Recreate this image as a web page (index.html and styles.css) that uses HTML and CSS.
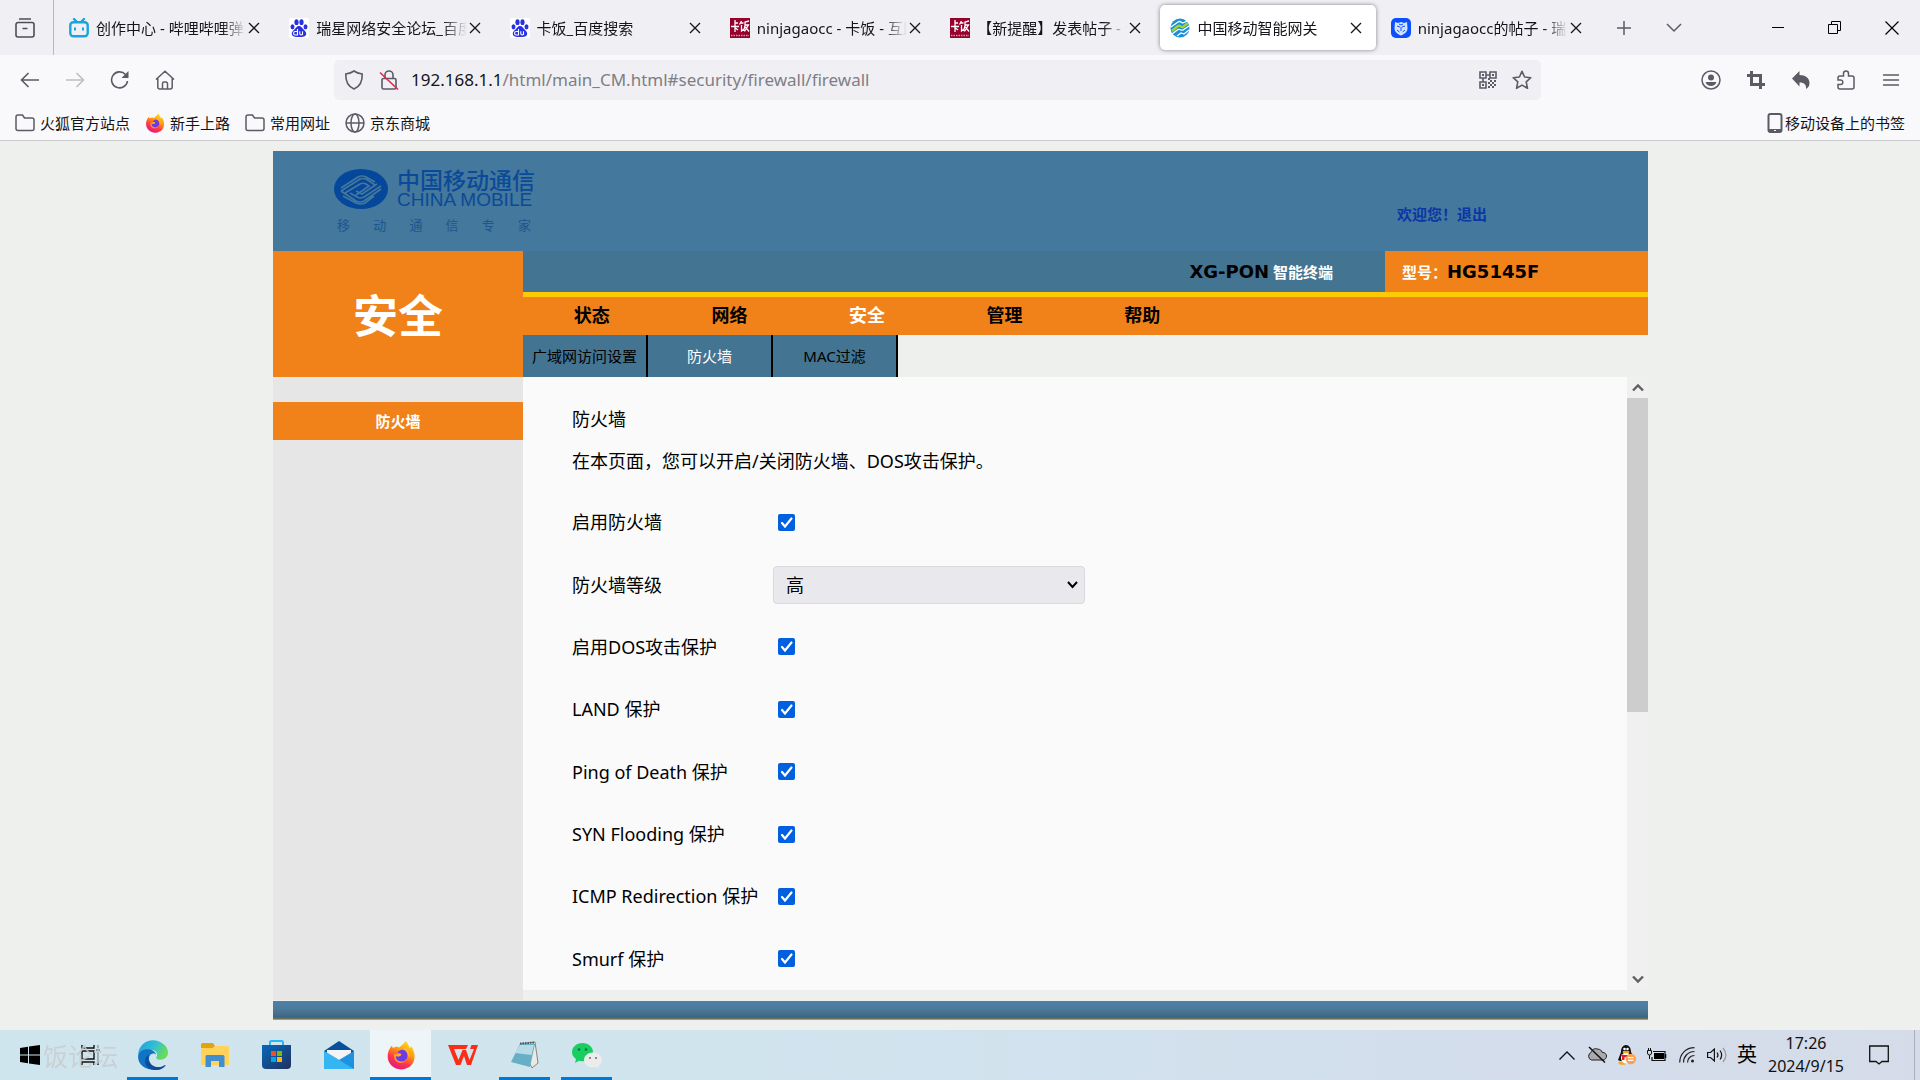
FILE: index.html
```html
<!DOCTYPE html>
<html lang="zh-CN">
<head>
<meta charset="utf-8">
<title>中国移动智能网关</title>
<link rel="stylesheet" href="styles.css">
</head>
<body>
<svg class="defs" aria-hidden="true">
  <defs>
    <linearGradient id="fxBody" x1="0.8" y1="0" x2="0.3" y2="1">
      <stop offset="0" stop-color="#ffe226"/><stop offset="0.4" stop-color="#ff980e"/><stop offset="0.7" stop-color="#ff3647"/><stop offset="1" stop-color="#e31587"/>
    </linearGradient>
    <linearGradient id="edgeTop" x1="0" y1="0" x2="1" y2="0.4">
      <stop offset="0" stop-color="#1b9de2"/><stop offset="0.6" stop-color="#35c1d1"/><stop offset="1" stop-color="#66dc58"/>
    </linearGradient>
    <linearGradient id="storeBody" x1="0" y1="0" x2="1" y2="1">
      <stop offset="0" stop-color="#0669bd"/><stop offset="1" stop-color="#22305c"/>
    </linearGradient>
    <symbol id="x" viewBox="0 0 12 12"><path d="M1 1l10 10M11 1L1 11" fill="none" stroke="#15141a" stroke-width="1.3"/></symbol>
    <symbol id="folder" viewBox="0 0 20 20"><path d="M1 4a2 2 0 0 1 2-2h4.500l2 3H17a2 2 0 0 1 2 2v8.500a2 2 0 0 1-2 2H3a2 2 0 0 1-2-2z" fill="none" stroke="#5b5b66" stroke-width="1.5"/></symbol>
    <symbol id="paw" viewBox="0 0 20 20"><rect width="20" height="20" rx="2" fill="#fff"/><g fill="#2932e1"><ellipse cx="7.500" cy="4.200" rx="2.100" ry="2.900"/><ellipse cx="12.500" cy="4.200" rx="2.100" ry="2.900"/><ellipse cx="3.500" cy="8.800" rx="2" ry="2.600"/><ellipse cx="16.500" cy="8.800" rx="2" ry="2.600"/><path d="M10 8c2.400 0 3 2 4.500 3.500s3.200 2.700 2.600 5-2.800 2.500-7.100 2.500-6.500-.3-7.100-2.500 1-3.500 2.600-5S7.600 8 10 8z"/></g><path d="M8.500 11v6H6.300a1.600 1.600 0 0 1 0-3.500h2M10.800 13.200v2.600c0 1.500 2.700 1.500 2.700 0v-2.600V17" fill="none" stroke="#fff" stroke-width="1.100"/></symbol>
    <symbol id="kafan" viewBox="0 0 20 20"><rect width="20" height="20" fill="#96002c"/><g fill="none" stroke="#fff" stroke-width="1.300"><path d="M5 2v12M5 5h3M1 8.500h8M5.500 10l2.500 2M11.500 3l-2 3.500M10.500 5h3M11.500 7v6l2-1.500M19 3l-4 1v4l-1.500 5M15 7h3.500l-4 6.500M15.500 9l3.500 4.500"/></g><path d="M1 17.500h18" stroke="#d99" stroke-width="1.600" stroke-dasharray="1.500 1"/></symbol>
    <symbol id="fx" viewBox="0 0 30 32"><path d="M20 1c3 3 3 5 4.500 7.500 1-.5 1-1.500 1-2.500C28.500 10 30 14 29.500 19 29 26.500 22.500 31.500 15 31.500S1 26 .7 18C.5 13 2.500 9 5.500 5.500c0 1.500.3 2 1 3C9 6.500 12 7 13 8c2-1.500 5-4 7-7z" fill="url(#fxBody)"/><path d="M18 6c4 4 7 7 6 13 0 0-1-2-2-3 0 6-4 9-8 8.500-5-.5-7.500-5-6-9.500 2 1 3.500 0 5.500-.5-1-2-.5-3 0-4.500 2.500 2 5.500 1 4.500-4z" fill="#ffbd2e" opacity=".75"/><path d="M14 11c4-2 8 1.500 8 5.500s-3 7-7 6.500c-3.500-.4-6-3-5.500-6 2 1.500 5.500.5 6-1.500.2-1-2.500-1.500-4-2 .5-1.500 1.500-2 2.500-2.500z" fill="#6f3adf"/></symbol>
  </defs>
</svg>

<header class="browser">
  <div class="tabstrip">
    <button class="tabview" aria-label="最近浏览">
      <svg width="20" height="20" viewBox="0 0 20 20" fill="none" stroke="#4f4e58" stroke-width="1.600"><path d="M4 1h12M1 6.500a2 2 0 0 1 2-2h14a2 2 0 0 1 2 2V17a2 2 0 0 1-2 2H3a2 2 0 0 1-2-2zM7.500 10.500h5"/></svg>
    </button>
    <div class="tabs" role="tablist">
      <div class="tab" role="tab"><svg class="fav" viewBox="0 0 20 20"><path d="M5 1l3 3M15 1l-3 3" stroke="#17a5de" stroke-width="2.400" stroke-linecap="round"/><rect x="1.300" y="4.300" width="17.400" height="14" rx="3" fill="none" stroke="#17a5de" stroke-width="2.400"/><path d="M6 9.500v3M14 9.500v3" stroke="#17a5de" stroke-width="2"/></svg><span class="title">创作中心 - 哔哩哔哩弹幕视频网</span><button class="close" aria-label="关闭"><svg width="12" height="12"><use href="#x"/></svg></button></div>
      <div class="tab" role="tab"><svg class="fav"><use href="#paw"/></svg><span class="title">瑞星网络安全论坛_百度搜索</span><button class="close" aria-label="关闭"><svg width="12" height="12"><use href="#x"/></svg></button></div>
      <div class="tab" role="tab"><svg class="fav"><use href="#paw"/></svg><span class="title">卡饭_百度搜索</span><button class="close" aria-label="关闭"><svg width="12" height="12"><use href="#x"/></svg></button></div>
      <div class="tab" role="tab"><svg class="fav"><use href="#kafan"/></svg><span class="title">ninjagaocc - 卡饭 - 互助分享</span><button class="close" aria-label="关闭"><svg width="12" height="12"><use href="#x"/></svg></button></div>
      <div class="tab" role="tab"><svg class="fav"><use href="#kafan"/></svg><span class="title">【新提醒】发表帖子 - 卡饭</span><button class="close" aria-label="关闭"><svg width="12" height="12"><use href="#x"/></svg></button></div>
      <div class="tab active" role="tab" aria-selected="true"><svg class="fav" viewBox="0 0 20 20"><circle cx="10" cy="10" r="9.500" fill="#1d8fd8"/><path d="M1 9l7-5c2-1.500 3 0 4.500 1l5-2" fill="none" stroke="#fff" stroke-width="1.300"/><path d="M2 13l6-5c2-1.500 3 2 5 1l5-4" fill="none" stroke="#9fd62e" stroke-width="2.400"/><path d="M2 16l6-4.500c2-1 3 1.500 5 .5l6-4M7 18l4-3 3 1 5-4" fill="none" stroke="#fff" stroke-width="1.300"/></svg><span class="title">中国移动智能网关</span><button class="close" aria-label="关闭"><svg width="12" height="12"><use href="#x"/></svg></button></div>
      <div class="tab" role="tab"><svg class="fav" viewBox="0 0 20 20"><rect width="20" height="20" rx="5" fill="#0a50ff"/><path d="M4 4l3 1 3-1 3 1 3-1 .5 6c0 4-3 6-6.500 7.500C6.500 16 3.500 14 3.500 10z" fill="#d6e2ff"/><path d="M6 8l3 1M14 8l-3 1M10 9v4M6 12l2.500 2M14 12l-2.500 2M8 6l2 1 2-1" stroke="#0a50ff" fill="none"/></svg><span class="title">ninjagaocc的帖子 - 瑞星安全</span><button class="close" aria-label="关闭"><svg width="12" height="12"><use href="#x"/></svg></button></div>
    </div>
    <button class="strip-btn" aria-label="新建标签页"><svg width="16" height="16" viewBox="0 0 16 16"><path d="M8 1v14M1 8h14" stroke="#5b5b66" stroke-width="1.500"/></svg></button>
    <button class="strip-btn" aria-label="所有标签页"><svg width="16" height="10" viewBox="0 0 16 10"><path d="M1 1l7 7 7-7" fill="none" stroke="#5b5b66" stroke-width="1.500"/></svg></button>
    <div class="winctl">
      <button aria-label="最小化"><svg width="12" height="12"><path d="M0 5.500h12" stroke="#000"/></svg></button>
      <button aria-label="还原"><svg width="13" height="13" fill="none" stroke="#000"><path d="M.5 3.500h9v9h-9zM3.500 3.500v-3h9v9h-3"/></svg></button>
      <button aria-label="关闭窗口"><svg width="14" height="14"><path d="M.5.5l13 13M13.500.5l-13 13" stroke="#000" stroke-width="1.200"/></svg></button>
    </div>
  </div>

  <div class="toolbar">
    <div class="btns">
      <button aria-label="后退"><svg width="20" height="20" viewBox="0 0 20 20" fill="none" stroke="#5b5b66" stroke-width="1.600"><path d="M19 10H1.500M8.500 3l-7 7 7 7"/></svg></button>
      <button aria-label="前进" disabled><svg width="20" height="20" viewBox="0 0 20 20" fill="none" stroke="#bdbdc2" stroke-width="1.600"><path d="M1 10h17.500M11.500 3l7 7-7 7"/></svg></button>
      <button aria-label="刷新"><svg width="20" height="20" viewBox="0 0 20 20"><path d="M17.500 11A8 8 0 1 1 15.500 4.500" fill="none" stroke="#5b5b66" stroke-width="1.600"/><path d="M18.500 1v7h-7z" fill="#5b5b66"/></svg></button>
      <button aria-label="主页"><svg width="20" height="20" viewBox="0 0 20 20" fill="none" stroke="#5b5b66" stroke-width="1.500"><path d="M1 9.500L10 1.200l9 8.300M2.800 8v9a2 2 0 0 0 2 2h10.400a2 2 0 0 0 2-2V8M7.500 19v-5.500a1.500 1.500 0 0 1 1.500-1.500h2a1.500 1.500 0 0 1 1.500 1.500V19"/></svg></button>
    </div>
    <div class="urlbar">
      <svg width="20" height="20" viewBox="0 0 20 20" fill="none" stroke="#5b5b66" stroke-width="1.600"><path d="M10 1c2.500 1.800 5 2.500 8.200 3 .3 7-2.200 12.500-8.200 15C4 16.500 1.500 11 1.800 4 5 3.500 7.500 2.800 10 1z"/></svg>
      <svg width="20" height="20" viewBox="0 0 20 20" fill="none"><path d="M6 8V5a4 4 0 0 1 8 0v3M4.500 8.500h11a1.500 1.500 0 0 1 1.500 1.500v7.500a1.500 1.500 0 0 1-1.500 1.500h-11A1.500 1.500 0 0 1 3 17.500V10a1.500 1.500 0 0 1 1.500-1.500z" stroke="#5b5b66" stroke-width="1.600"/><path d="M1 2.500l18 17" stroke="#e22850" stroke-width="1.600"/></svg>
      <a class="url" href="#security/firewall/firewall"><b>192.168.1.1</b>/html/main_CM.html#security/firewall/firewall</a>
      <button aria-label="二维码"><svg width="18" height="18" viewBox="0 0 18 18"><g fill="none" stroke="#5b5b66" stroke-width="1.600"><path d="M1 1h6v6H1zM11 1h6v6h-6zM1 11h6v6H1z"/><path d="M7 4h4M4 7v4"/></g><path d="M3 3h2v2H3zM13 3h2v2h-2zM3 13h2v2H3zM9 7h2v2H9zM11 9h2v2h-2zM15 9h2v2h-2zM9 11h2v2H9zM13 11h2v2h-2zM11 13h2v2h-2zM15 13h2v2h-2zM9 15h2v2H9zM13 15h2v2h-2z" fill="#5b5b66"/></svg></button>
      <button aria-label="收藏"><svg width="20" height="20" viewBox="0 0 20 20"><path d="M10 1.300l2.600 5.700 6.200.700-4.600 4.200 1.300 6.400L10 15.100l-5.500 3.200 1.300-6.400L1.200 7.700 7.400 7z" fill="none" stroke="#5b5b66" stroke-width="1.600" stroke-linejoin="round"/></svg></button>
    </div>
    <div class="btns">
      <button aria-label="账户"><svg width="20" height="20" viewBox="0 0 20 20"><circle cx="10" cy="10" r="9" fill="none" stroke="#5b5b66" stroke-width="1.500"/><circle cx="10" cy="7.500" r="3" fill="#5b5b66"/><path d="M4.500 12h11c-.8 2.500-3 4-5.500 4s-4.700-1.500-5.500-4z" fill="#5b5b66"/></svg></button>
      <button aria-label="截图"><svg width="18" height="18" viewBox="0 0 18 18"><path d="M4.500 0v13.500H18M0 4.500h13.500V18" fill="none" stroke="#5b5b66" stroke-width="3"/></svg></button>
      <button aria-label="撤销"><svg width="18" height="18" viewBox="0 0 18 18"><path d="M7.500 0v4c6 0 10 3 10 8 0 3-1 4.500-3.500 6 .5-4-1.500-6.500-6.500-6.500v4L0 7.500z" fill="#5b5b66"/></svg></button>
      <button aria-label="扩展"><svg width="18" height="20" viewBox="0 0 18 20"><path d="M6.500 6V3.500a2.500 2.500 0 0 1 5 0V6H15a2 2 0 0 1 2 2v9a2 2 0 0 1-2 2H3a2 2 0 0 1-2-2v-2.500h2.500a2.300 2.300 0 0 0 0-4.600H1V8a2 2 0 0 1 2-2z" fill="none" stroke="#5b5b66" stroke-width="1.500"/></svg></button>
      <button aria-label="菜单"><svg width="16" height="14" viewBox="0 0 16 14"><path d="M0 2h16M0 7h16M0 12h16" stroke="#5b5b66" stroke-width="1.500"/></svg></button>
    </div>
  </div>

  <nav class="bookmarks">
    <a href="#"><svg width="20" height="20"><use href="#folder"/></svg>火狐官方站点</a>
    <a href="#"><svg width="20" height="20"><use href="#fx"/></svg>新手上路</a>
    <a href="#"><svg width="20" height="20"><use href="#folder"/></svg>常用网址</a>
    <a href="#"><svg width="20" height="20" viewBox="0 0 20 20" fill="none" stroke="#5b5b66" stroke-width="1.500"><circle cx="10" cy="10" r="9"/><ellipse cx="10" cy="10" rx="4" ry="9"/><path d="M1 10h18"/></svg>京东商城</a>
    <a href="#" class="mobile"><svg width="16" height="20" viewBox="0 0 16 20"><rect x="1.500" y="1" width="13" height="18" rx="2" fill="none" stroke="#5b5b66" stroke-width="2"/><path d="M1.500 17.500h13" stroke="#5b5b66" stroke-width="3"/><path d="M7 17.500h2" stroke="#fff"/></svg>移动设备上的书签</a>
  </nav>
</header>

<main class="page">
  <div class="banner">
    <div class="brand">
      <svg width="54" height="40" viewBox="0 0 54 40"><ellipse cx="27" cy="20" rx="27" ry="20" fill="#05479b"/><g fill="none" stroke="#44789c" stroke-width="1.700"><path d="M7 19L24 8q4-2 8 0l9 5M7 22l19-12q3-1 6 0l9 6M11 24l15-9q3-1.500 6 0l3 2-13 9M47 20L30 32q-4 2-8 0L7 22M47 17L30 28q-4 2-7 0l-7-4M43 15l-15 10-6-3M40 27l-9 7q-4 2-9 0L9 27"/></g></svg>
      <div class="brand-name"><span class="cn">中国移动通信</span><span class="en">CHINA MOBILE</span></div>
      <div class="slogan"><span>移</span><span>动</span><span>通</span><span>信</span><span>专</span><span>家</span></div>
    </div>
    <div class="welcome">欢迎您！<a href="#logout">退出</a></div>
  </div>

  <div class="head">
    <div class="section"><h1>安全</h1></div>
    <div class="head-main">
      <div class="device">
        <div class="kind"><b>XG-PON</b> 智能终端</div>
        <div class="model">型号：<b>HG5145F</b></div>
      </div>
      <nav class="mainnav">
        <a href="#status">状态</a><a href="#network">网络</a><a href="#security" class="on">安全</a><a href="#manage">管理</a><a href="#help">帮助</a>
      </nav>
      <nav class="subnav">
        <a href="#wan">广域网访问设置</a><a href="#firewall" class="on">防火墙</a><a href="#mac">MAC过滤</a>
      </nav>
    </div>
  </div>

  <div class="work">
    <aside class="side"><a href="#firewall">防火墙</a></aside>
    <section class="content">
      <div class="panel">
        <div class="intro"><h2>防火墙</h2><p>在本页面，您可以开启/关闭防火墙、DOS攻击保护。</p></div>
        <form class="form">
          <div class="row"><label for="fw">启用防火墙</label><input type="checkbox" id="fw" checked></div>
          <div class="row"><label for="level">防火墙等级</label><select id="level"><option>高</option><option>中</option><option>低</option></select></div>
          <div class="row"><label for="dos">启用DOS攻击保护</label><input type="checkbox" id="dos" checked></div>
          <div class="row"><label for="land">LAND 保护</label><input type="checkbox" id="land" checked></div>
          <div class="row"><label for="ping">Ping of Death 保护</label><input type="checkbox" id="ping" checked></div>
          <div class="row"><label for="syn">SYN Flooding 保护</label><input type="checkbox" id="syn" checked></div>
          <div class="row"><label for="icmp">ICMP Redirection 保护</label><input type="checkbox" id="icmp" checked></div>
          <div class="row"><label for="smurf">Smurf 保护</label><input type="checkbox" id="smurf" checked></div>
        </form>
      </div>
      <div class="scroll">
        <button aria-label="向上滚动"><svg width="12" height="9"><path d="M1 7.500l5-5 5 5" fill="none" stroke="#606060" stroke-width="2.400"/></svg></button>
        <div class="track"><div class="thumb"></div></div>
        <button aria-label="向下滚动"><svg width="12" height="9"><path d="M1 1.500l5 5 5-5" fill="none" stroke="#606060" stroke-width="2.400"/></svg></button>
      </div>
    </section>
  </div>
  <div class="footbar"></div>
</main>

<footer class="taskbar">
  <div class="apps">
    <button class="start" aria-label="开始"><svg width="20" height="20" viewBox="0 0 20 20"><path d="M0 3l8-1.200v7.700H0zM9 1.600L20 0v9.500H9zM0 10.500h8v7.700L0 17zM9 10.500h11V20L9 18.400z"/></svg></button>
    <button aria-label="任务视图"><svg width="20" height="20" viewBox="0 0 20 20" fill="none" stroke="#111" stroke-width="1.400"><path d="M1 0v3h12V0M1 6h12v8H1zM1 20v-3h12v3M17 0v3M17 7v13M15.500 5h3"/></svg></button>
    <button class="open" aria-label="Edge"><svg width="30" height="30" viewBox="0 0 30 30"><path d="M.3 13C1.500 5.500 7.500.3 15 .3S30 6 30 12.500c0 4.500-3.500 7.200-7.500 7.200-3 0-5-1.200-4-2.700 1.500-2 1-6.500-5-7C8 9.500 3 12 .3 17z" fill="url(#edgeTop)"/><path d="M.2 16C1 11 6 8.500 11 9.300c4 .6 6.500 3 7 5.200-1-1.500-5.500-2-6.700 2-1.500 5 3 11.500 9 12.300C11 32-.8 26 .2 16z" fill="#1272c4"/><path d="M11.200 14.500c-3 6 2 12.500 9 12.500 3 0 5-1 6.500-1.800.7-.3 1 .1.600.7C24 30 17 31.500 11.500 28.500c-6-3-6-11-.3-14z" fill="#0d4d99"/></svg></button>
    <button aria-label="文件资源管理器"><svg width="28" height="24" viewBox="0 0 28 24"><path d="M0 1.500A1.500 1.500 0 0 1 1.500 0H12l2 3-2 2H0z" fill="#e6a20c"/><path d="M0 5h12l2-2h12.500A1.500 1.500 0 0 1 28 4.500V22H0z" fill="#ffd25a"/><path d="M4.500 24V13.500A1.500 1.500 0 0 1 6 12h16a1.500 1.500 0 0 1 1.500 1.500V24H18v-6h-8v6z" fill="#3e8ed0"/></svg></button>
    <button aria-label="应用商店"><svg width="29" height="30" viewBox="0 0 29 30"><path d="M8 7V2.500A1.500 1.500 0 0 1 9.500 1h10A1.500 1.500 0 0 1 21 2.500V7" fill="none" stroke="#2bb5f5" stroke-width="2"/><path d="M0 5h29v20a4 4 0 0 1-4 4H4a4 4 0 0 1-4-4z" fill="url(#storeBody)"/><path d="M9 11h5v5H9z" fill="#f25022"/><path d="M15 11h5v5h-5z" fill="#7fba00"/><path d="M9 17h5v5H9z" fill="#00a4ef"/><path d="M15 17h5v5h-5z" fill="#ffb900"/></svg></button>
    <button aria-label="邮件"><svg width="30" height="28" viewBox="0 0 30 28"><path d="M0 10L15 0l15 10v18H0z" fill="#08509b"/><path d="M3 9h24v8L15 22 3 17z" fill="#f2f2f4"/><path d="M0 10l15 9 15-9v18H0z" fill="#1d92de"/><path d="M0 10l30 18H0z" fill="#35b6f3"/><path d="M3 9h24L15 18z" fill="#f4f4f6"/></svg></button>
    <button class="open current" aria-label="Firefox"><svg width="28" height="30"><use href="#fx"/></svg></button>
    <button aria-label="WPS"><svg width="30" height="21" viewBox="0 0 30 21"><path d="M0 0h20l-2 4H6l4.500 11L14.500 5h3.500l3.500 10L26 4h-4l1.500-4H30l-7 20h-4l-3-9-3.500 9H8z" fill="#fb2d17"/></svg></button>
    <button class="open" aria-label="记事本"><svg width="28" height="28" viewBox="0 0 28 28"><path d="M9 3L24 1l3 21-6 5z" fill="#e9e9e6" stroke="#8d8478"/><path d="M9 3l15 0-5 23L0 21z" fill="#67afc5"/><path d="M9 4l14 0-2.500 10L4 12z" fill="#b8dbe5"/><path d="M9 2.500l15-1" stroke="#555" stroke-width="2" stroke-dasharray="1.500 1"/></svg></button>
    <button class="open" aria-label="微信"><svg width="30" height="25" viewBox="0 0 30 25"><path d="M10.500 0C4.500 0 0 4 0 9c0 3 1.500 5.300 4 7l-1 4 4-2.200c1.200.3 2.300.4 3.500.4C16.500 18.200 21 14 21 9s-4.500-9-10.500-9z" fill="#18ce62"/><path d="M21 9.500c-5 0-9 3.300-9 7.500s4 7.500 9 7.500c1 0 2-.1 3-.4l3 1.400-.6-2.700c2.200-1.300 3.600-3.400 3.600-5.800 0-4.200-4-7.500-9-7.500z" fill="#ececec"/><g fill="#0b7138"><circle cx="7" cy="6.500" r="1.300"/><circle cx="14" cy="6.500" r="1.300"/></g><g fill="#777"><circle cx="18" cy="15" r="1.100"/><circle cx="24" cy="15" r="1.100"/></g></svg></button>
    <span class="mark">饭论坛</span>
  </div>
  <div class="tray">
    <button aria-label="显示隐藏的图标"><svg width="16" height="9"><path d="M.5 8.500L8 1l7.500 7.500" fill="none" stroke="#111" stroke-width="1.300"/></svg></button>
    <button aria-label="OneDrive"><svg width="20" height="18" viewBox="0 0 20 18"><path d="M4.500 14a4 4 0 0 1-.5-7.500C5 3 8 2 11 3.200c2 0 3.500 1 4 3C18 6.500 19.500 8 19.500 10S18 14 16 14z" fill="#aaa9ab" stroke="#222"/><path d="M2 1l16 15.500" stroke="#111" stroke-width="1.500"/></svg></button>
    <button aria-label="QQ"><svg width="18" height="20" viewBox="0 0 18 20"><ellipse cx="4.500" cy="18" rx="4" ry="1.800" fill="#f5a623"/><path d="M3 7c0-4 2-7 5-7s5 3 5 7l3 6-1 3H2l-2-1z" fill="#111"/><ellipse cx="8" cy="13" rx="5" ry="5.500" fill="#fff"/><path d="M2.500 8.500c3 2 8 2 11 0v2.500c-2 1-5 1.500-7 1.200V15H4v-3.500z" fill="#e0202d"/><circle cx="6.500" cy="4" r="1.300" fill="#fff"/><circle cx="9.500" cy="4" r="1.300" fill="#fff"/><ellipse cx="8" cy="7" rx="3.500" ry="1.300" fill="#f5a623"/><circle cx="12.800" cy="14" r="5.200" fill="#ff9e4f"/><path d="M10 12.700h5.500M10 15.300h5.500" stroke="#fff" stroke-width="1.300"/></svg></button>
    <button aria-label="电池"><svg width="20" height="14" viewBox="0 0 20 14"><path d="M6 3.500h12v9H5V9" fill="none" stroke="#111" stroke-width="1.200"/><path d="M7 5h10v6H7z"/><path d="M18.500 6v4" stroke="#111" stroke-width="1.600"/><path d="M.5 2.500h4V5a2 2 0 0 1-4 0zM1.500 0v2.500M3.500 0v2.500M2.500 7v4" fill="none" stroke="#111"/></svg></button>
    <button aria-label="网络"><svg width="16" height="16" viewBox="0 0 16 16" fill="none" stroke="#222" stroke-width="1.200"><path d="M.7 15.500C.7 7 7 .700 15.500.700M4.500 15.500c0-6 4.500-11 11-11M8.500 15.500c0-4 3-7 7-7"/><circle cx="13.500" cy="14" r="1.500" fill="#222" stroke="none"/></svg></button>
    <button aria-label="音量"><svg width="20" height="16" viewBox="0 0 20 16" fill="none" stroke="#111" stroke-width="1.200"><path d="M.6 5.500h2.900L7.400 2v12l-3.900-3.500H.6zM10 5.500c1.200 1.500 1.200 3.500 0 5M13 3.500c2.200 3 2.200 6 0 9"/><path d="M16 1c3.700 4.500 3.700 9.500 0 14" stroke="#999"/></svg></button>
    <button class="ime" aria-label="输入法">英</button>
  </div>
  <div class="clock"><time>17:26</time><time>2024/9/15</time></div>
  <button class="notify" aria-label="通知"><svg width="20" height="20" viewBox="0 0 20 20"><path d="M.7 1h18.600v15.500H13L10 19l-3-2.500H.7z" fill="none" stroke="#111" stroke-width="1.300"/></svg></button>
  <button class="peek" aria-label="显示桌面"></button>
</footer>
</body>
</html>
```
FILE: styles.css
```css
* { box-sizing: border-box; }

body {
  margin: 0;
  min-height: 100vh;
  display: flex;
  flex-direction: column;
  background: #eef0ed;
  color: #000;
  font: 15px/20px "Noto Sans", "Noto Sans CJK SC", sans-serif;
}

button {
  padding: 0;
  border: 0;
  background: none;
  font: inherit;
  color: inherit;
  display: flex;
  align-items: center;
  justify-content: center;
}

a { color: inherit; text-decoration: none; }
h1, h2, p { margin: 0; font-weight: 400; }
svg { flex: none; }
.defs { position: absolute; width: 0; height: 0; }

/* Browser chrome */
.browser {
  background: #f9f9fb;
  border-bottom: 1px solid #ccccce;
  color: #15141a;
}

.tabstrip { display: flex; height: 55px; background: #f0f0f4; }
.tabview { width: 54px; padding-right: 4px; border-right: 1px solid #b8b8be; }
.tabs { flex: 1; min-width: 0; display: flex; gap: 5px; padding: 5px 3px 5px 5px; }

.tab {
  flex: 1 1 0;
  min-width: 0;
  display: flex;
  align-items: center;
  padding: 0 12px 0 10px;
  border-radius: 5px;
}

.tab.active { background: #fff; box-shadow: 0 0 4px rgba(0, 0, 0, 0.45); }
.fav { width: 20px; height: 20px; margin-right: 7px; }

.title {
  flex: 1;
  overflow: hidden;
  white-space: nowrap;
  mask-image: linear-gradient(to left, transparent, #000 24px);
}

.close { width: 16px; height: 20px; }
.strip-btn { width: 50px; }
.winctl { display: flex; padding-left: 50px; }
.winctl button { width: 57px; }

.toolbar { display: flex; padding: 5px 7px; }
.btns { display: flex; }
.btns button { width: 45px; height: 40px; }

.urlbar {
  flex: 1;
  display: flex;
  align-items: center;
  gap: 15px;
  height: 40px;
  margin: 0 147px;
  padding: 0 9px 0 10px;
  border-radius: 5px;
  background: #f0f0f4;
}

.url { flex: 1; margin-left: -3px; font-size: 17px; color: #7f7e85; }
.url b { font-weight: 400; color: #15141a; }

.bookmarks { display: flex; align-items: center; gap: 15px; height: 35px; padding: 0 15px; }
.bookmarks a { display: flex; align-items: center; gap: 5px; }
.bookmarks .mobile { margin-left: auto; gap: 2px; }

/* Gateway page */
.page {
  flex: 1;
  display: flex;
  flex-direction: column;
  padding: 10px 272px 10px 273px;
}

.banner {
  display: flex;
  justify-content: space-between;
  height: 100px;
  padding: 18px 161px 0 61px;
  background: #44789c;
}

.brand {
  display: grid;
  grid-template-columns: 54px 138px;
  column-gap: 9px;
  align-content: start;
  color: #0b4a98;
}

.brand-name { display: flex; flex-direction: column; }
.brand-name .cn { font-size: 23px; line-height: 22px; font-weight: 500; }
.brand-name .en { font: 19px/18px "Liberation Sans", Arial, sans-serif; white-space: nowrap; }

.slogan {
  grid-column: 1 / -1;
  display: flex;
  justify-content: space-between;
  padding: 6px 4px 0 3px;
  font-size: 13px;
  color: #1f5590;
}

.welcome { padding-top: 35px; font-weight: 700; color: #0b36a6; }

.head { display: flex; height: 126px; }

.section {
  width: 250px;
  display: flex;
  align-items: center;
  justify-content: center;
  padding-top: 4px;
  background: #f08219;
  color: #fff;
}

.section h1 { font-size: 45px; line-height: 60px; font-weight: 700; }
.head-main { flex: 1; display: flex; flex-direction: column; }
.device { display: flex; height: 41px; background: #437492; color: #fff; font-weight: 700; line-height: 41px; }
.device b { font-family: "DejaVu Sans", Verdana, sans-serif; font-size: 18px; color: #000; }
.kind { flex: 1; text-align: right; padding-right: 52px; }
.model { width: 263px; padding-left: 17px; background: #f08219; }

.mainnav {
  display: flex;
  height: 43px;
  padding-right: 437px;
  border-top: 5px solid #ffca05;
  background: #f08219;
  font-size: 18px;
  font-weight: 700;
  line-height: 36px;
  text-align: center;
}

.mainnav a { flex: 1; }
.mainnav .on, .subnav .on { color: #fff; }

.subnav { display: flex; height: 42px; line-height: 42px; text-align: center; }
.subnav a { width: 125px; border-right: 2px solid #000; background: #437492; }

.work { flex: 1; display: flex; }
.side { width: 250px; padding-top: 25px; background: #e6e6e6; }

.side a {
  display: block;
  background: #f08219;
  color: #fff;
  font-weight: 700;
  line-height: 38px;
  text-align: center;
}

.content { flex: 1; display: flex; margin-bottom: 10px; }
.panel { flex: 1; display: flex; flex-direction: column; padding-left: 49px; background: #fafafa; font-size: 18px; }
.intro { height: 114px; padding-top: 30px; line-height: 24px; }
.intro h2 { font-size: 18px; line-height: 24px; margin-bottom: 18px; }

.form { flex: 1; display: grid; grid-auto-rows: 1fr; }
.row { display: flex; align-items: center; }
.row label { width: 201px; line-height: 24px; white-space: nowrap; }

.row input {
  appearance: none;
  width: 17px;
  height: 17px;
  margin: 0 5px;
  border-radius: 2px;
  background: #0060df url("data:image/svg+xml,%3Csvg xmlns='http://www.w3.org/2000/svg' viewBox='0 0 17 17'%3E%3Cpath d='M4 9l3 3.500L13.500 4.500' fill='none' stroke='white' stroke-width='2.200' stroke-linecap='round'/%3E%3C/svg%3E");
}

.row select {
  appearance: none;
  width: 312px;
  height: 38px;
  padding: 0 12px;
  border: 1px solid #d9d9dc;
  border-radius: 4px;
  background: #e9e9ed url("data:image/svg+xml,%3Csvg xmlns='http://www.w3.org/2000/svg' width='11' height='8'%3E%3Cpath d='M1 1l4.500 5L10 1' fill='none' stroke='black' stroke-width='2'/%3E%3C/svg%3E") no-repeat right 6px center;
  color: #000;
  font: inherit;
}

.scroll { width: 21px; display: flex; flex-direction: column; background: #f0f0f0; }
.scroll button { height: 21px; }
.track { flex: 1; }
.thumb { height: 55%; background: #cdcdcd; }

.footbar {
  height: 19px;
  margin-top: 1px;
  border-bottom: 1px solid #d98a3a;
  background: linear-gradient(#5080a8, #4c7a9d 8px, #416a80 15px, #2f6692 16px, #857251 18px);
}

/* Taskbar */
.taskbar {
  display: flex;
  height: 50px;
  background: linear-gradient(to right, #cfe5ed, #d0e4ee 40%, #d3deec 75%, #d5dbe9);
}

.apps { position: relative; flex: 1; display: flex; gap: 1px; }
.apps button { width: 61px; }
.apps .start { width: 59px; }
.apps .open { background: linear-gradient(#0078d7, #0078d7) center bottom / 51px 3px no-repeat; }
.apps .current { background-color: #edf5f9; background-size: 61px 3px; }
.mark { position: absolute; left: 43px; top: 12px; font-size: 25px; line-height: 28px; color: #c8ccd0; opacity: 0.8; }

.tray { display: flex; }
.tray button { width: 30px; }
.tray .ime { font-size: 20px; }

.clock {
  width: 82px;
  display: flex;
  flex-direction: column;
  justify-content: center;
  padding-left: 6px;
  font-size: 16px;
  line-height: 23px;
  text-align: center;
  color: #111;
}

.notify { width: 70px; }
.peek { width: 6px; border-left: 1px solid #a8afbc; }
```
